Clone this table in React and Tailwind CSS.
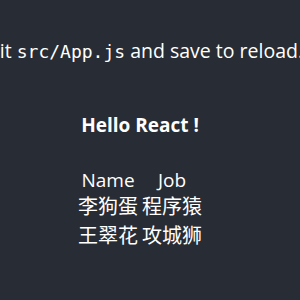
const rows = [
  { name: '李狗蛋', job: '程序猿' },
  { name: '王翠花', job: '攻城狮' },
];

export default function App() {
  return (
    <div className="w-[300px] h-[300px] overflow-hidden bg-[#282c34] text-white font-['Open_Sans','Noto_Sans_CJK_SC',sans-serif]">
      <div className="w-[280px] flex flex-col items-center">
        <p className="mt-[37px] whitespace-nowrap text-[19.5px] leading-[28px]">
          Edit <code className="font-['DejaVu_Sans_Mono',monospace] text-[18px]">src/App.js</code> and save to reload.
        </p>
        <h3 className="mt-[47px] text-[19px] leading-[24px] font-bold">Hello React !</h3>
        <table className="mt-[31px] text-[19px] leading-[22px] border-separate border-spacing-0">
          <thead>
            <tr>
              <th className="px-[2px] py-px font-normal text-center">Name</th>
              <th className="px-[2px] py-px font-normal text-center">Job</th>
            </tr>
          </thead>
          <tbody>
            {rows.map((r) => (
              <tr key={r.name}>
                <td className="px-[2px] pt-0 pb-[2px] text-[20px] leading-[27px] font-['Noto_Sans_CJK_SC',sans-serif]">{r.name}</td>
                <td className="px-[2px] pt-0 pb-[2px] text-[20px] leading-[27px] font-['Noto_Sans_CJK_SC',sans-serif]">{r.job}</td>
              </tr>
            ))}
          </tbody>
        </table>
      </div>
    </div>
  );
}
